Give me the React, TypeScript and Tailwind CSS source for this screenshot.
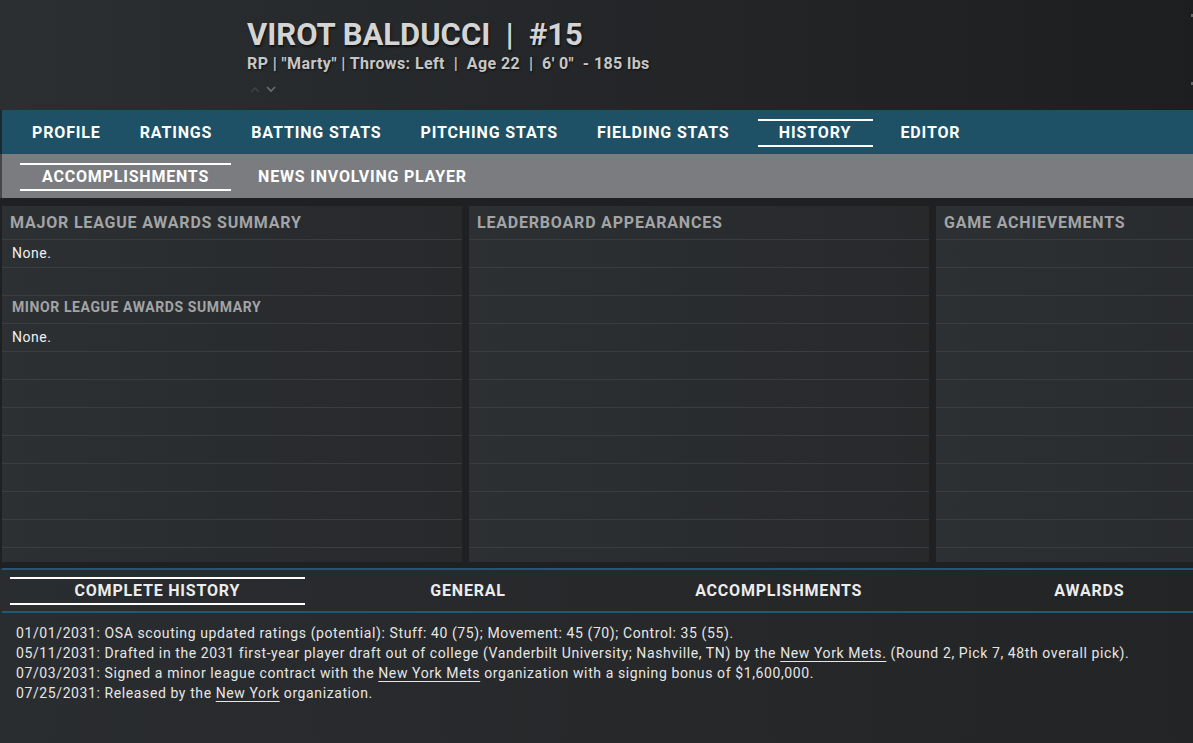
const navItems = ["PROFILE", "RATINGS", "BATTING STATS", "PITCHING STATS", "FIELDING STATS", "HISTORY", "EDITOR"];
const bottomTabs = ["COMPLETE HISTORY", "GENERAL", "ACCOMPLISHMENTS", "AWARDS"];

const Link = ({ children }: { children: string }) => (
  <span className="underline underline-offset-[3px] decoration-1">{children}</span>
);

const Rows = ({ count }: { count: number }) => (
  <>
    {Array.from({ length: count }).map((_, i) => (
      <div key={i} className="h-[28px] border-t border-[#393d40] shrink-0" />
    ))}
  </>
);

const Panel = ({ title, children }: { title: string; children?: React.ReactNode }) => (
  <div className="w-[460px] shrink-0 h-[356px] overflow-hidden bg-gradient-to-r from-[#2c3033] to-[#27292b] flex flex-col">
    <div className="h-[33px] shrink-0 flex items-center pt-[1px] px-[8px] text-[16px] tracking-[0.8px] font-bold text-[#a3a4a6]">{title}</div>
    {children}
  </div>
);

export default function App() {
  return (
    <div
      className="w-[1193px] h-[743px] overflow-hidden bg-gradient-to-r from-[#2b2f32] to-[#1d1e1f] flex flex-col"
      style={{ fontFamily: "Roboto, 'Liberation Sans', sans-serif" }}
    >
      {/* header */}
      <div className="h-[110px] shrink-0 pl-[247px] pt-[17px] relative">
        <div className="text-[31px] leading-[36px] font-bold text-[#d4d4d4] whitespace-pre [text-shadow:1px_2px_2px_rgba(0,0,0,0.6)]">
          VIROT BALDUCCI  |  #15
        </div>
        <div className="text-[16px] leading-[20px] tracking-[0.4px] font-bold text-[#c6c6c6] whitespace-pre pt-[1px] [text-shadow:1px_1px_2px_rgba(0,0,0,0.6)]">
          RP | "Marty" | Throws: Left  |  Age 22  |  6' 0"  - 185 lbs
        </div>
        <div className="flex gap-[6px] mt-[12px] ml-[3px]">
          <svg width="10" height="7" viewBox="0 0 10 7"><path d="M1 6 L5 2 L9 6" stroke="#3c4144" strokeWidth="1.6" fill="none" /></svg>
          <svg width="10" height="7" viewBox="0 0 10 7"><path d="M1 1 L5 5 L9 1" stroke="#6a6e71" strokeWidth="1.6" fill="none" /></svg>
        </div>
        <div className="absolute right-0 top-[14px] w-[2px] h-[3px] bg-[#666]" />
        <div className="absolute right-0 top-[82px] w-[2px] h-[3px] bg-[#666]" />
      </div>

      {/* main nav */}
      <div className="h-[44px] shrink-0 bg-[#1e5165] border-l-2 border-[#1a2a31] flex items-center pt-[2px] pl-[30px] gap-[39px]">
        {navItems.map((n) => (
          <div
            key={n}
            className={
              "text-[16px] tracking-[0.85px] font-bold text-white h-[28px] flex items-center " +
              (n === "HISTORY" ? "border-y-2 border-white -mx-[11px] w-[115px] justify-center" : "")
            }
          >
            {n}
          </div>
        ))}
      </div>

      {/* sub nav */}
      <div className="h-[44px] shrink-0 bg-[#7b7c7f] border-l-2 border-[#45474a] flex items-center pt-[2px] pl-[18px] gap-[27px]">
        <div className="text-[16px] tracking-[0.8px] font-bold text-white h-[28px] flex items-center border-y-2 border-white px-[22px]">
          ACCOMPLISHMENTS
        </div>
        <div className="text-[16px] tracking-[0.8px] font-bold text-white">NEWS INVOLVING PLAYER</div>
      </div>

      {/* panels */}
      <div className="bg-[#1e2022] pt-[8px] pl-[2px] flex gap-[7px] shrink-0 h-[370px]">
        <Panel title="MAJOR LEAGUE AWARDS SUMMARY">
          <div className="h-[28px] shrink-0 border-t border-[#393d40] flex items-center px-[10px] text-[14px] tracking-[0.5px] text-[#f0f0f0]">None.</div>
          <div className="h-[28px] shrink-0 border-t border-[#393d40]" />
          <div className="h-[28px] shrink-0 border-t border-[#393d40] flex items-center pb-[4px] px-[10px] text-[14px] tracking-[0.6px] font-bold text-[#a3a4a6]">
            MINOR LEAGUE AWARDS SUMMARY
          </div>
          <div className="h-[28px] shrink-0 border-t border-[#393d40] flex items-center px-[10px] text-[14px] tracking-[0.5px] text-[#f0f0f0]">None.</div>
          <Rows count={9} />
        </Panel>
        <Panel title="LEADERBOARD APPEARANCES">
          <Rows count={13} />
        </Panel>
        <Panel title="GAME ACHIEVEMENTS">
          <Rows count={13} />
        </Panel>
      </div>

      {/* bottom history */}
      <div className="flex-1 bg-gradient-to-r from-[#2a2d30] to-[#232425] pl-[2px]">
        <div className="border-y-2 border-[#1f5a72] h-[45px] flex">
          {bottomTabs.map((t, i) => (
            <div key={t} className="w-[310.7px] shrink-0 flex items-center justify-center px-[8px]">
              <div
                className={
                  "w-full h-[28px] flex items-center justify-center pt-[1px] text-[16px] tracking-[0.8px] font-bold text-[#ececec] " +
                  (i === 0 ? "border-y-2 border-white" : "")
                }
              >
                {t}
              </div>
            </div>
          ))}
        </div>
        <div className="pl-[14px] pt-[10px] text-[14px] leading-[20px] tracking-[0.6px] text-[#e6e6e6] whitespace-nowrap">
          <div>01/01/2031: OSA scouting updated ratings (potential): Stuff: 40 (75); Movement: 45 (70); Control: 35 (55).</div>
          <div>
            05/11/2031: Drafted in the 2031 first-year player draft out of college (Vanderbilt University; Nashville, TN) by the{" "}
            <Link>New York Mets.</Link> (Round 2, Pick 7, 48th overall pick).
          </div>
          <div>
            07/03/2031: Signed a minor league contract with the <Link>New York Mets</Link> organization with a signing bonus of $1,600,000.
          </div>
          <div>
            07/25/2031: Released by the <Link>New York</Link> organization.
          </div>
        </div>
      </div>
    </div>
  );
}
